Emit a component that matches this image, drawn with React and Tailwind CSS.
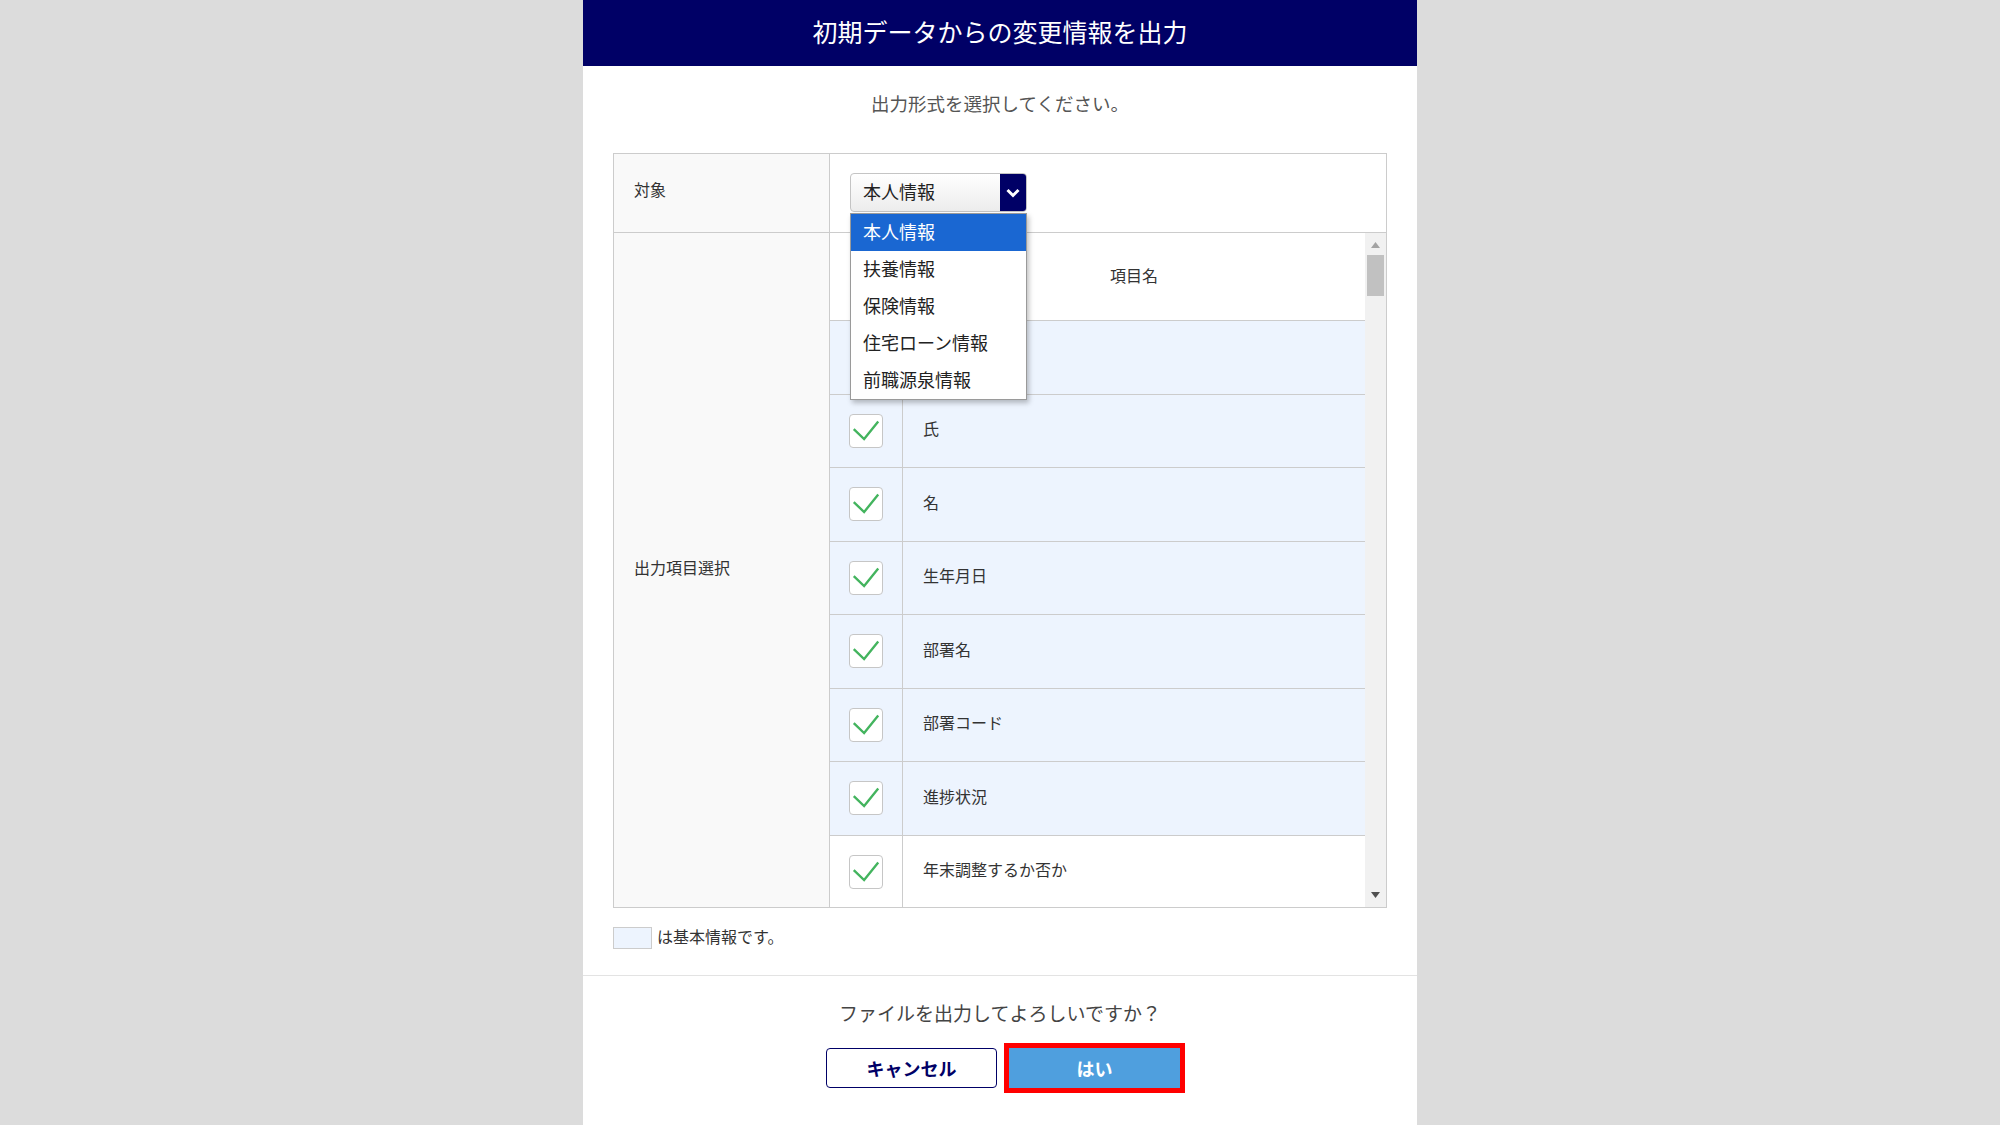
import { useState } from 'react';

const rows = [
  { label: '', basic: true, hidden: true },
  { label: '氏', basic: true },
  { label: '名', basic: true },
  { label: '生年月日', basic: true },
  { label: '部署名', basic: true },
  { label: '部署コード', basic: true },
  { label: '進捗状況', basic: true },
  { label: '年末調整するか否か', basic: false },
];

const options = ['本人情報', '扶養情報', '保険情報', '住宅ローン情報', '前職源泉情報'];

function CheckBox() {
  return (
    <div className="w-[34px] h-[34px] rounded-[4px] border border-[#c6c6c6] bg-white">
      <svg width="32" height="32" viewBox="0 0 34 34">
        <path d="M4 15 L15 25.5 L30 7" fill="none" stroke="#43b45e" strokeWidth="2.5" strokeLinejoin="miter" />
      </svg>
    </div>
  );
}

export default function App() {
  const [target] = useState('本人情報');

  return (
    <div className="min-h-screen bg-[#dcdcdc] flex justify-center [font-family:'Noto_Sans_CJK_JP','Noto_Sans',sans-serif]">
      <div className="w-[834px] min-h-[1125px] bg-white flex flex-col">
        <div className="h-[66px] bg-[#000066] flex items-center justify-center pb-[4px] text-white text-[25px] leading-[30px]">
          初期データからの変更情報を出力
        </div>

        <div className="px-[30px]">
          <p className="mt-[25px] text-center text-[18.5px] leading-[24px] text-[#555]">
            出力形式を選択してください。
          </p>

          <div className="mt-[38px] border border-[#cccccc]">
            {/* 対象 */}
            <div className="flex h-[79px] border-b border-[#cccccc]">
              <div className="w-[216px] shrink-0 bg-[#f9f9f9] border-r border-[#cccccc] flex items-center pl-[20px] pb-[9px] text-[16px] leading-[20px] text-[#333]">
                対象
              </div>
              <div className="relative flex-1 pl-[20px] pt-[19px]">
                <div className="flex w-[177px] h-[39px] rounded-[4px] border border-[#c4c4c4] bg-gradient-to-b from-white to-[#ececec] overflow-hidden">
                  <div className="flex-1 flex items-center pl-[12px] pb-[4px] text-[18px] leading-[22px] text-[#222]">{target}</div>
                  <div className="w-[26px] bg-[#000066] flex items-center justify-center">
                    <svg width="16" height="16" viewBox="0 0 16 16">
                      <path d="M2.5 5 L8 10.5 L13.5 5" fill="none" stroke="white" strokeWidth="3" />
                    </svg>
                  </div>
                </div>

                <div className="absolute z-10 left-[20px] top-[59px] w-[177px] bg-white border border-[#9a9a9a] shadow-[2px_3px_5px_rgba(0,0,0,0.25)]">
                  {options.map((o, i) => (
                    <div
                      key={o}
                      className={
                        'h-[37px] flex items-center pl-[12px] pb-[4px] text-[18px] leading-[22px] ' +
                        (i === 0 ? 'bg-[#1a67d2] text-white' : 'text-[#222]')
                      }
                    >
                      {o}
                    </div>
                  ))}
                </div>
              </div>
            </div>

            {/* 出力項目選択 */}
            <div className="flex h-[674px]">
              <div className="w-[216px] shrink-0 bg-[#f9f9f9] border-r border-[#cccccc] flex items-center pl-[20px] pb-[6px] text-[16px] leading-[20px] text-[#333]">
                出力項目選択
              </div>
              <div className="flex-1 flex min-w-0">
                <div className="flex-1 overflow-hidden">
                  <div className="grid grid-cols-[73px_1fr] h-[88px] border-b border-[#cccccc]">
                    <div className="border-r border-[#cccccc]"></div>
                    <div className="flex items-center justify-center pb-[4px] text-[16px] leading-[20px] text-[#333]">項目名</div>
                  </div>
                  {rows.map((r, i) => (
                    <div
                      key={i}
                      className={
                        'grid grid-cols-[73px_1fr] h-[73.5px] border-b border-[#cccccc] ' +
                        (r.basic ? 'bg-[#edf4fe]' : 'bg-white')
                      }
                    >
                      <div className="border-r border-[#cccccc] flex items-center justify-center">
                        {!r.hidden && <CheckBox />}
                      </div>
                      <div className="flex items-center pl-[20px] pb-[5px] text-[16px] leading-[20px] text-[#333]">
                        {r.label}
                      </div>
                    </div>
                  ))}
                </div>

                <div className="w-[21px] shrink-0 bg-[#f1f1f1] flex flex-col items-center">
                  <div className="h-[22px] flex items-center justify-center pt-[2px]">
                    <svg width="9" height="6" viewBox="0 0 9 6">
                      <path d="M0 6 L4.5 0 L9 6 Z" fill="#a3a3a3" />
                    </svg>
                  </div>
                  <div className="w-[17px] h-[41px] bg-[#c1c1c1]"></div>
                  <div className="flex-1"></div>
                  <div className="h-[22px] flex items-center justify-center pb-[2px]">
                    <svg width="9" height="6" viewBox="0 0 9 6">
                      <path d="M0 0 L9 0 L4.5 6 Z" fill="#505050" />
                    </svg>
                  </div>
                </div>
              </div>
            </div>
          </div>

          <div className="mt-[18px] flex items-center">
            <div className="w-[39px] h-[22px] bg-[#edf4fe] border border-[#cccccc]"></div>
            <span className="ml-[5px] pb-[3px] text-[16px] leading-[20px] text-[#333]">は基本情報です。</span>
          </div>
        </div>

        <div className="mt-[26px] border-t border-[#e3e3e3] flex flex-col items-center">
          <p className="mt-[25px] text-[19px] leading-[24px] text-[#444]">ファイルを出力してよろしいですか？</p>
          <div className="mt-[23px] flex gap-[12px] pl-[6px]">
            <button className="w-[171px] h-[40px] rounded-[4px] border-[1.5px] border-[#000066] bg-white text-[#000066] font-bold text-[18px] leading-[22px]">
              キャンセル
            </button>
            <div className="relative">
              <button className="w-[171px] h-[40px] bg-[#4f9fde] text-white font-bold text-[18px] leading-[22px]">
                はい
              </button>
              <div className="absolute -inset-[5px] border-[5px] border-[#ff0000] pointer-events-none"></div>
            </div>
          </div>
        </div>
      </div>
    </div>
  );
}
